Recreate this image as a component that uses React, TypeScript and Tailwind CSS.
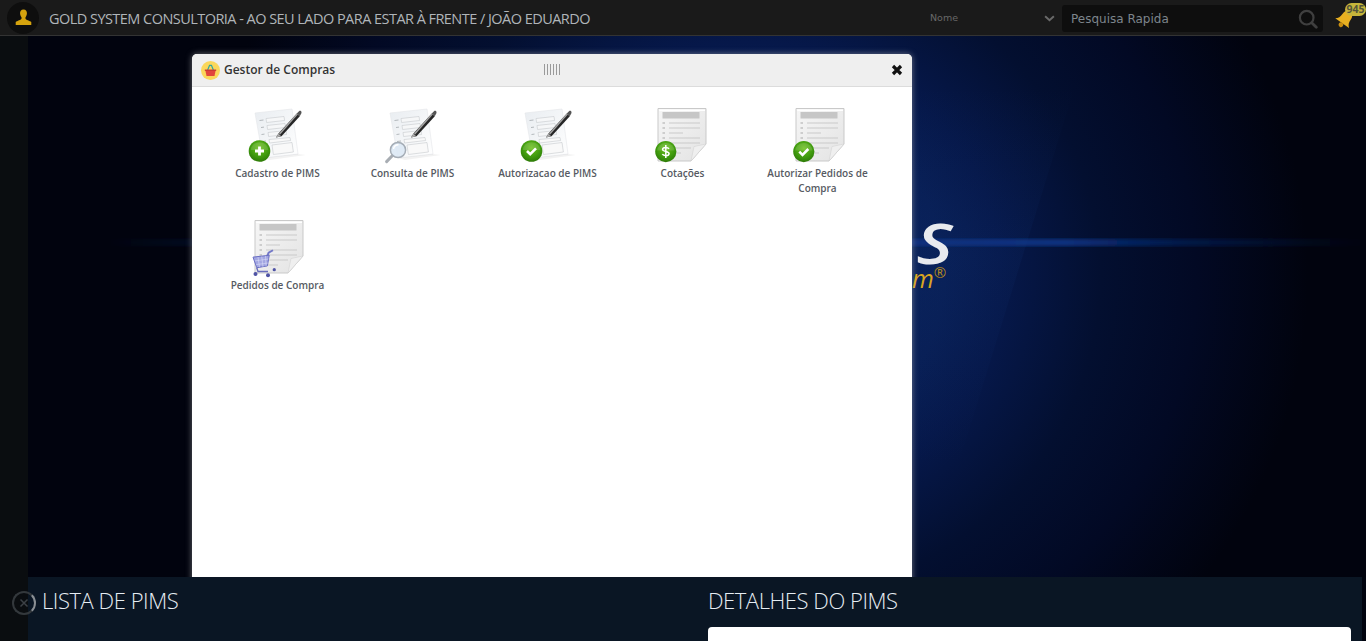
import React from "react";

function GreenBadge({ cx, cy, r, kind }: { cx: number; cy: number; r: number; kind: "plus" | "check" | "dollar" }) {
  return (
    <g>
      <circle cx={cx} cy={cy} r={r} fill="url(#greenBall)" />
      <path d={`M${cx - r + 2} ${cy - 1}a${r - 2} ${r - 3} 0 0 1 ${2 * r - 4} 0z`} fill="#ffffff" opacity="0.14" />
      {kind === "plus" && (
        <path d={`M${cx} ${cy - 4.5}v9M${cx - 4.5} ${cy}h9`} stroke="#fff" strokeWidth="2.8" fill="none" />
      )}
      {kind === "check" && (
        <path d={`M${cx - 4.5} ${cy}l3.2 3.2 5.8-5.8`} stroke="#fff" strokeWidth="2.6" fill="none" />
      )}
      {kind === "dollar" && (
        <path
          d={`M${cx + 3.2} ${cy - 2.8}c-1-1.6-6.2-2-6.4.6c-.1 2.6 6.6 1.6 6.5 4.4c-.2 2.6-5.6 2.2-6.8.4M${cx} ${cy - 6.5}v13`}
          stroke="#fff"
          strokeWidth="1.5"
          fill="none"
        />
      )}
    </g>
  );
}

function Defs() {
  return (
    <defs>
      <radialGradient id="greenBall" cx="50%" cy="35%" r="70%">
        <stop offset="0%" stopColor="#6cc01c" />
        <stop offset="60%" stopColor="#3f9a0e" />
        <stop offset="100%" stopColor="#2a7406" />
      </radialGradient>
      <linearGradient id="paper" x1="0" y1="0" x2="1" y2="1">
        <stop offset="0%" stopColor="#f6f6f6" />
        <stop offset="100%" stopColor="#e3e3e3" />
      </linearGradient>
      <linearGradient id="formPaper" x1="0" y1="0" x2="1" y2="1">
        <stop offset="0%" stopColor="#e9edf1" />
        <stop offset="100%" stopColor="#ffffff" />
      </linearGradient>
    </defs>
  );
}

function FormIcon({ badge, cx = 11.5 }: { badge: "plus" | "check" | "lens"; cx?: number }) {
  return (
    <svg viewBox="0 0 60 56" width="60" height="56" className="block">
      <Defs />
      <path d="M7 5L44 1L50 46L15 50Z" fill="url(#formPaper)" stroke="#e4e6e9" strokeWidth="0.6" />
      <path d="M15 50L50 46L58 47L22 52Z" fill="#000" opacity="0.05" />
      <g stroke="#c6cacd" strokeWidth="0.6" fill="#f6f7f8">
        <path d="M18 10.5L36 8.5L36.6 12.5L18.6 14.5Z" />
        <path d="M19 17.5L37 15.5L37.6 19.5L19.6 21.5Z" />
        <path d="M20 24.5L38 22.5L38.6 26.5L20.6 28.5Z" />
        <path d="M21 31.5L42 29.5L42.6 32.5L21.6 35Z" fill="#f9f9f9" />
        <path d="M24 37L44 34.5L45.4 44L25.4 46.5Z" fill="#f9f9f9" />
      </g>
      <g stroke="#9a9fa4" strokeWidth="0.7">
        <path d="M11.5 12.5l4-.5M13 19.5l3-.4M13.5 26.5l3-.4M14 33.5l4-.5" />
      </g>
      <path d="M28 29.5L30.5 25.6L48.8 5.5L51.8 8.2L33.5 28.2Z" fill="#262626" />
      <path d="M31 25.4L48.8 5.5L49.8 6.4L32.2 26.4Z" fill="#a4a4a4" />
      <path d="M48.8 5.5L51 3.3C52 2.4 53.6 3 53.5 4.4L53.4 5.3L51.8 8.2Z" fill="#555" />
      <path d="M28 29.5L30.5 25.6L33.2 28.2Z" fill="#a9a9a9" />
      {badge === "lens" ? (
        <g>
          <path d="M9.5 47.5L3.6 53.6" stroke="#a8adb3" strokeWidth="3" strokeLinecap="round" />
          <circle cx="15" cy="42" r="7.6" fill="#dbe8f5" fillOpacity="0.85" stroke="#a5adb6" strokeWidth="1.5" />
          <path d="M10.5 41a5 5 0 0 1 5-4.2" stroke="#fff" strokeWidth="1.4" fill="none" />
        </g>
      ) : (
        <GreenBadge cx={cx} cy={43} r={10.8} kind={badge} />
      )}
    </svg>
  );
}

function PageLines() {
  return (
    <g>
      <rect x="9.5" y="4" width="37" height="6.5" fill="#c6c6c6" />
      <g stroke="#c9c9c9" strokeWidth="1.1">
        <path d="M16 15h31M16 20h31M16 25h14M16 30h31M16 35h31M16 40h22M16 45h12" />
      </g>
      <g stroke="#a9a9a9" strokeWidth="1.1">
        <path d="M9.5 15h2.5M9.5 20h2.5M9.5 25h2.5M9.5 30h2.5M9.5 35h2.5M9.5 40h2.5" />
      </g>
    </g>
  );
}

function SheetIcon({ children, shift }: { children?: React.ReactNode; shift: number }) {
  return (
    <svg viewBox="0 0 60 56" width="60" height="56" className="block overflow-visible">
      <Defs />
      <g transform={`translate(${shift} 0)`}>
        <path d="M5 0.5H53V36L38 53H5Z" fill="url(#paper)" stroke="#c9c9c9" strokeWidth="1" />
        <path d="M6.2 1.5H52V3H6.2z" fill="#fff" />
        <PageLines />
        <path d="M53 36L41 38.5L38 53Z" fill="#efefef" stroke="#cfcfcf" strokeWidth="0.5" />
      </g>
      {children}
    </svg>
  );
}

function Cart() {
  return (
    <g stroke="#6a6fc4" fill="none" transform="translate(0 -11) scale(1.25)">
      <path d="M20 33l-3.5 2-1 2.5" strokeWidth="1.6" stroke="#7378c8" />
      <path d="M4 38.5L17 37L15.5 45.5L7 47Z" fill="#9a9fe0" fillOpacity="0.9" strokeWidth="0.8" />
      <path d="M5.5 41.5l11-1.5M6.5 44.5l9.5-1.3M8 38.5l1.2 8M11 38l1 8.5M14 37.5l.5 8" strokeWidth="0.4" stroke="#e3e4fa" />
      <path d="M7 47l1 3h8" strokeWidth="1.1" stroke="#686cbc" />
      <circle cx="6" cy="52" r="1.6" fill="#4f53a5" stroke="none" />
      <circle cx="16" cy="53" r="1.6" fill="#4f53a5" stroke="none" />
      <circle cx="21" cy="48.5" r="1.3" fill="#4f53a5" stroke="none" />
    </g>
  );
}

function Item({ label, children }: { label: string; children: React.ReactNode }) {
  return (
    <div className="flex flex-col items-center w-[112px] justify-self-center">
      {children}
      <div className="mt-[2px] text-center text-[10px] leading-[15px] font-semibold text-[#565a62] font-['Open_Sans',sans-serif]">
        {label}
      </div>
    </div>
  );
}

export default function App() {
  return (
    <div className="w-[1366px] h-[641px] flex flex-col overflow-hidden bg-[#01040f] relative font-['Open_Sans',sans-serif]">
      <header className="h-9 shrink-0 bg-[#1a1a1a] border-b border-[#333] flex items-center">
        <div className="ml-[7px] w-8 h-8 rounded-full bg-[#0e0e0e] flex items-center justify-center">
          <svg viewBox="0 0 20 20" width="19" height="19">
            <path
              d="M10 1.5c2.6 0 3.8 2 3.6 4.4c-.1 1.6-.7 3-1.5 3.8v1.7c0 1 4.9 2.2 6.1 3.4v3H1.8v-3c1.2-1.2 6.1-2.4 6.1-3.4V9.7C7.1 8.9 6.5 7.5 6.4 5.9C6.2 3.5 7.4 1.5 10 1.5z"
              fill="#d5a30e"
            />
          </svg>
        </div>
        <div className="ml-[10px] mt-[2px] text-[14.5px] tracking-[-0.54px] text-[#b0b5b9] whitespace-nowrap font-['Open_Sans',sans-serif]">
          GOLD SYSTEM CONSULTORIA - AO SEU LADO PARA ESTAR À FRENTE / JOÃO EDUARDO
        </div>
        <div className="ml-auto flex items-center h-full pt-[2px]">
          <div className="w-[132px] flex items-center justify-between pr-[7px]">
            <span className="text-[9.5px] text-[#686868] font-['DejaVu_Sans',sans-serif]">Nome</span>
            <svg viewBox="0 0 12 8" width="11" height="7">
              <path d="M1 1.5l5 4.5 5-4.5" stroke="#6a6a6a" strokeWidth="2.2" fill="none" />
            </svg>
          </div>
          <div className="w-[261px] h-[27px] rounded-[3px] bg-[#0e0e0e] flex items-center justify-between pl-[9px] pr-[5px]">
            <span className="text-[12px] text-[#7d858c] font-['DejaVu_Sans',sans-serif]">Pesquisa Rapida</span>
            <svg viewBox="0 0 20 20" width="20" height="20">
              <circle cx="8.7" cy="8.7" r="6.8" stroke="#3f3f3f" strokeWidth="2.2" fill="none" />
              <path d="M13.7 13.7l4.6 4.6" stroke="#3f3f3f" strokeWidth="2.8" strokeLinecap="round" />
            </svg>
          </div>
          <div className="relative w-[43px] h-full">
            <svg viewBox="0 0 22 24" width="22" height="24" className="absolute left-[11px] top-[5px]">
              <g transform="rotate(35 11 12)">
                <path d="M11 3c-3.2 0-5 2.6-5 6c0 4-1 6-3.4 8h16.8C17 15 16 13 16 9c0-3.4-1.8-6-5-6z" fill="#e8b021" />
                <circle cx="11" cy="2.6" r="1.4" fill="#e8b021" />
                <circle cx="11" cy="19" r="2.4" fill="#c98e10" />
              </g>
            </svg>
            <div className="absolute left-[22px] top-[1px] w-[21px] h-[13px] rounded-full bg-[#c7b53a] text-[10.5px] leading-[13px] font-bold text-center text-[#55553a] font-['Open_Sans',sans-serif]">
              945
            </div>
          </div>
        </div>
      </header>

      <div className="flex-1 flex min-h-0">
        <div className="w-7 shrink-0 bg-[#0a0d10]" />
        <div className="flex-1 min-w-0 flex flex-col">
          <div className="flex-1 min-h-0 relative overflow-hidden bg-[#01030e] bg-[radial-gradient(ellipse_560px_520px_at_720px_240px,#0a2662_0%,#081e54_35%,#06184a_45%,#030f30_63%,#020924_80%,#01030e_100%)]">
            <svg className="absolute inset-0" width="1338" height="541" viewBox="0 0 1338 541">
              <defs>
                <linearGradient id="beam" x1="0" y1="0" x2="1" y2="0">
                  <stop offset="0%" stopColor="#0a3a92" stopOpacity="0" />
                  <stop offset="12%" stopColor="#0a2a70" stopOpacity="0.3" />
                  <stop offset="76%" stopColor="#0a3a92" stopOpacity="0.85" />
                  <stop offset="86%" stopColor="#0a2f7c" stopOpacity="0.4" />
                  <stop offset="100%" stopColor="#0a2a70" stopOpacity="0" />
                </linearGradient>
                <linearGradient id="wedge" x1="0" y1="0" x2="0" y2="1">
                  <stop offset="0%" stopColor="#1a4a9a" stopOpacity="0" />
                  <stop offset="45%" stopColor="#1a4a9a" stopOpacity="0.08" />
                  <stop offset="100%" stopColor="#1a4a9a" stopOpacity="0" />
                </linearGradient>
                <filter id="soft">
                  <feGaussianBlur stdDeviation="2" />
                </filter>
              </defs>
              <path d="M1047 50L930 430L800 430L800 50Z" fill="url(#wedge)" />
              <rect x="80" y="203" width="1258" height="7" fill="url(#beam)" filter="url(#soft)" />
            </svg>
            <span className="absolute left-[892px] top-[187px] text-[56px] leading-[38px] italic font-semibold text-[#e8eaee] font-['Open_Sans',sans-serif] scale-x-125">
              S
            </span>
            <span className="absolute left-[884px] top-[229px] text-[25px] leading-[26px] italic text-[#d9a520] font-['Open_Sans',sans-serif]">
              m<span className="text-[15px] leading-[14px] not-italic align-top text-[#b58a20]">®</span>
            </span>

            <div className="relative ml-[164px] mt-[18px] w-[720px] h-full bg-white rounded-t-[5px] shadow-[0_0_6px_rgba(190,190,190,0.55)]">
              <div className="h-[33px] bg-[#efefef] border-b border-[#dcdcdc] rounded-t-[5px] flex items-center pl-[9px] pr-[9px] relative">
                <svg viewBox="0 0 20 20" width="19" height="19">
                  <circle cx="10" cy="10" r="10" fill="#fbd75b" />
                  <path d="M4.5 9.5h11l-1.3 6.3H5.8Z" fill="#e2453c" />
                  <path d="M7 9.5l2-5h2l2 5" stroke="#35a7a0" strokeWidth="1.3" fill="none" />
                  <path d="M4 9h12v1.4H4z" fill="#c93a32" />
                </svg>
                <span className="ml-[4px] text-[12px] text-[#333] font-semibold font-['Open_Sans',sans-serif]">
                  Gestor de Compras
                </span>
                <svg viewBox="0 0 16 11" width="16" height="11" className="absolute left-[352px] top-[10px]">
                  <path d="M.5 0v11M3.5 0v11M6.5 0v11M9.5 0v11M12.5 0v11M15.5 0v11" stroke="#9a9a9a" strokeWidth="1" />
                </svg>
                <svg viewBox="0 0 12 12" width="12" height="12" className="ml-auto">
                  <path d="M2 2l8 8M10 2l-8 8" stroke="#111" strokeWidth="3.2" />
                </svg>
              </div>
              <div className="pl-[18px] pt-[21px] grid grid-cols-[repeat(5,135px)] auto-rows-[112px]">
                <Item label="Cadastro de PIMS">
                  <FormIcon badge="plus" />
                </Item>
                <Item label="Consulta de PIMS">
                  <FormIcon badge="lens" />
                </Item>
                <Item label="Autorizacao de PIMS">
                  <FormIcon badge="check" cx={13.5} />
                </Item>
                <Item label="Cotações">
                  <SheetIcon shift={0}>
                    <GreenBadge cx={12.8} cy={43.6} r={10.6} kind="dollar" />
                  </SheetIcon>
                </Item>
                <Item label="Autorizar Pedidos de Compra">
                  <SheetIcon shift={3}>
                    <GreenBadge cx={15.8} cy={43.6} r={10.6} kind="check" />
                  </SheetIcon>
                </Item>
                <Item label="Pedidos de Compra">
                  <SheetIcon shift={2}>
                    <Cart />
                  </SheetIcon>
                </Item>
              </div>
            </div>
          </div>

          <div className="h-16 shrink-0 mr-1 bg-[#0a1624] flex text-white font-['Open_Sans',sans-serif]">
            <div className="w-[680px] pl-[14px] pt-[8px] text-[22px] leading-[30px] font-light tracking-[-0.45px] text-[#e6edf3]">
              LISTA DE PIMS
            </div>
            <div className="flex-1 min-w-0 pt-[8px]">
              <div className="text-[22px] leading-[30px] font-light tracking-[-0.45px] text-[#e6edf3]">DETALHES DO PIMS</div>
              <div className="mt-[12px] mr-[11px] h-[30px] bg-white rounded-t-[4px]" />
            </div>
          </div>
        </div>
      </div>

      <div className="absolute left-[12px] top-[591px] w-6 h-6 rounded-full border-2 border-[#33383c] border-r-[#8a8f94] flex items-center justify-center">
        <svg viewBox="0 0 10 10" width="10" height="10">
          <path d="M1.5 1.5l7 7M8.5 1.5l-7 7" stroke="#3c4146" strokeWidth="1.5" />
        </svg>
      </div>
    </div>
  );
}
